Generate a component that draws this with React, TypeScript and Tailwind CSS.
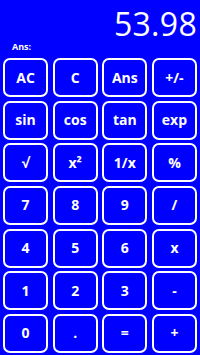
import React from "react";

const keys = [
  "AC", "C", "Ans", "+/-",
  "sin", "cos", "tan", "exp",
  "√", "x²", "1/x", "%",
  "7", "8", "9", "/",
  "4", "5", "6", "x",
  "1", "2", "3", "-",
  "0", ".", "=", "+",
];

export default function App() {
  return (
    <div
      className="w-[200px] h-[355px] bg-[#0000ff] text-white flex flex-col overflow-hidden"
      style={{ fontFamily: '"Open Sans", "Noto Sans", sans-serif' }}
    >
      <div className="h-[58px] flex flex-col">
        <div className="mt-[8px] pr-[3px] text-right text-[32px] leading-[32px] tracking-[0.3px]">53.98</div>
        <div className="mt-[2px] pl-[12px] text-[9px] leading-[9px] font-bold">Ans:</div>
      </div>
      <div className="h-[295px] px-[3px] grid grid-cols-4 grid-rows-7 gap-x-[4.5px] gap-y-[3.5px]">
        {keys.map((k) => (
          <div
            key={k}
            className="border-2 border-white rounded-[7px] flex items-center justify-center text-[14px] font-bold leading-none"
          >
            {k}
          </div>
        ))}
      </div>
    </div>
  );
}
